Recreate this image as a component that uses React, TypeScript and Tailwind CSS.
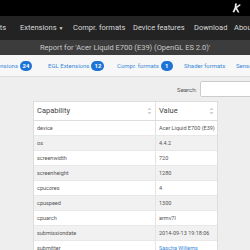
import React from "react";

const rows: [string, string, boolean?][] = [
  ["device", "Acer Liquid E700 (E39)"],
  ["os", "4.4.2"],
  ["screenwidth", "720"],
  ["screenheight", "1280"],
  ["cpucores", "4"],
  ["cpuspeed", "1300"],
  ["cpuarch", "armv7l"],
  ["submissiondate", "2014-09-13 19:18:06"],
  ["submitter", "Sascha Willems", true],
];

function SortIcon() {
  return (
    <svg width="5" height="8" viewBox="0 0 5 8" className="shrink-0">
      <path d="M2.5 0.5 L4.5 3 L0.5 3 Z" fill="#d0d0d0" />
      <path d="M2.5 7.5 L4.5 5 L0.5 5 Z" fill="#d0d0d0" />
    </svg>
  );
}

function Badge({ n }: { n: string }) {
  return (
    <span className="ml-[2px] inline-flex h-[10px] min-w-[12px] items-center justify-center rounded-full bg-[#1e74d6] px-[3px] text-[6px] font-bold leading-none text-white">
      {n}
    </span>
  );
}

export default function App() {
  return (
    <div className="h-[250px] w-[250px] overflow-hidden bg-[#eeeeee] font-['Roboto',sans-serif]">
      {/* top strip */}
      <div className="flex h-[16px] items-center justify-end bg-black pr-[9px]">
        <svg width="9" height="10" viewBox="0 0 9 10">
          <path d="M3 0.5 L5 0.5 L4.3 3.5 L8 1 L8.6 2.2 L5 5 L7.5 9.5 L5.8 9.5 L3.8 6.2 L2.2 9.5 L0.5 9 L2.6 4.5 Z" fill="#e8e8e8" />
        </svg>
      </div>

      {/* main nav */}
      <div className="flex h-[24px] items-center bg-[#232323] text-[7.5px] whitespace-nowrap text-[#d8d8d8]">
        <div className="flex w-[20px] shrink-0 justify-end pr-[14px]">Reports</div>
        <div className="w-[53px] shrink-0">
          Extensions <span className="text-[5px]">▼</span>
        </div>
        <div className="w-[60px] shrink-0">Compr. formats</div>
        <div className="w-[61px] shrink-0">Device features</div>
        <div className="w-[40px] shrink-0">Download</div>
        <div className="shrink-0">About</div>
      </div>

      {/* report title */}
      <div className="flex h-[15px] items-center justify-center bg-[#3c3c3c] text-[7.5px] whitespace-nowrap text-[#c8c8c8]">
        Report for 'Acer Liquid E700 (E39) (OpenGL ES 2.0)'
      </div>

      {/* tabs */}
      <div className="flex h-[22px] items-center border-b border-[#dddddd] bg-[#f7f7f7] text-[6px] whitespace-nowrap text-[#3a8ad8]">
        <div className="flex w-[48px] shrink-0 items-center justify-end pr-[16px]">
          Extensions <Badge n="24" />
        </div>
        <div className="flex w-[69px] shrink-0 items-center">
          EGL Extensions <Badge n="12" />
        </div>
        <div className="flex w-[67px] shrink-0 items-center">
          Compr. formats <Badge n="1" />
        </div>
        <div className="w-[52px] shrink-0">Shader formats</div>
        <div className="shrink-0">Sensors</div>
      </div>

      {/* search */}
      <div className="flex items-center justify-end gap-[3px] pt-[4px] text-[6px] text-[#555]">
        <span>Search:</span>
        <div className="-mr-[6px] h-[16px] w-[56px] shrink-0 rounded-[2px] border border-[#cccccc] bg-white" />
      </div>

      {/* table */}
      <div className="mt-[4px] ml-[33px] w-[185px] border border-[#dddddd] bg-white">
        <div className="flex h-[19px] items-center border-b border-[#dddddd] text-[7.5px] text-[#444]">
          <div className="flex h-full w-[122px] items-center justify-between border-r border-[#e4e4e4] pr-[3px] pl-[3px]">
            <span>Capability</span>
            <SortIcon />
          </div>
          <div className="flex h-full flex-1 items-center justify-between pr-[3px] pl-[3px]">
            <span>Value</span>
            <SortIcon />
          </div>
        </div>
        {rows.map(([k, v, link], i) => (
          <div
            key={k}
            className={`flex h-[15px] items-center border-b border-[#e8e8e8] text-[5.5px] whitespace-nowrap text-[#555] ${
              i % 2 === 1 ? "bg-[#f1f1f1]" : "bg-white"
            }`}
          >
            <div className="flex h-full w-[122px] items-center border-r border-[#e4e4e4] pl-[3px]">{k}</div>
            <div className={`flex h-full flex-1 items-center pl-[3px] ${link ? "text-[#3a8ad8]" : ""}`}>{v}</div>
          </div>
        ))}
      </div>
    </div>
  );
}
